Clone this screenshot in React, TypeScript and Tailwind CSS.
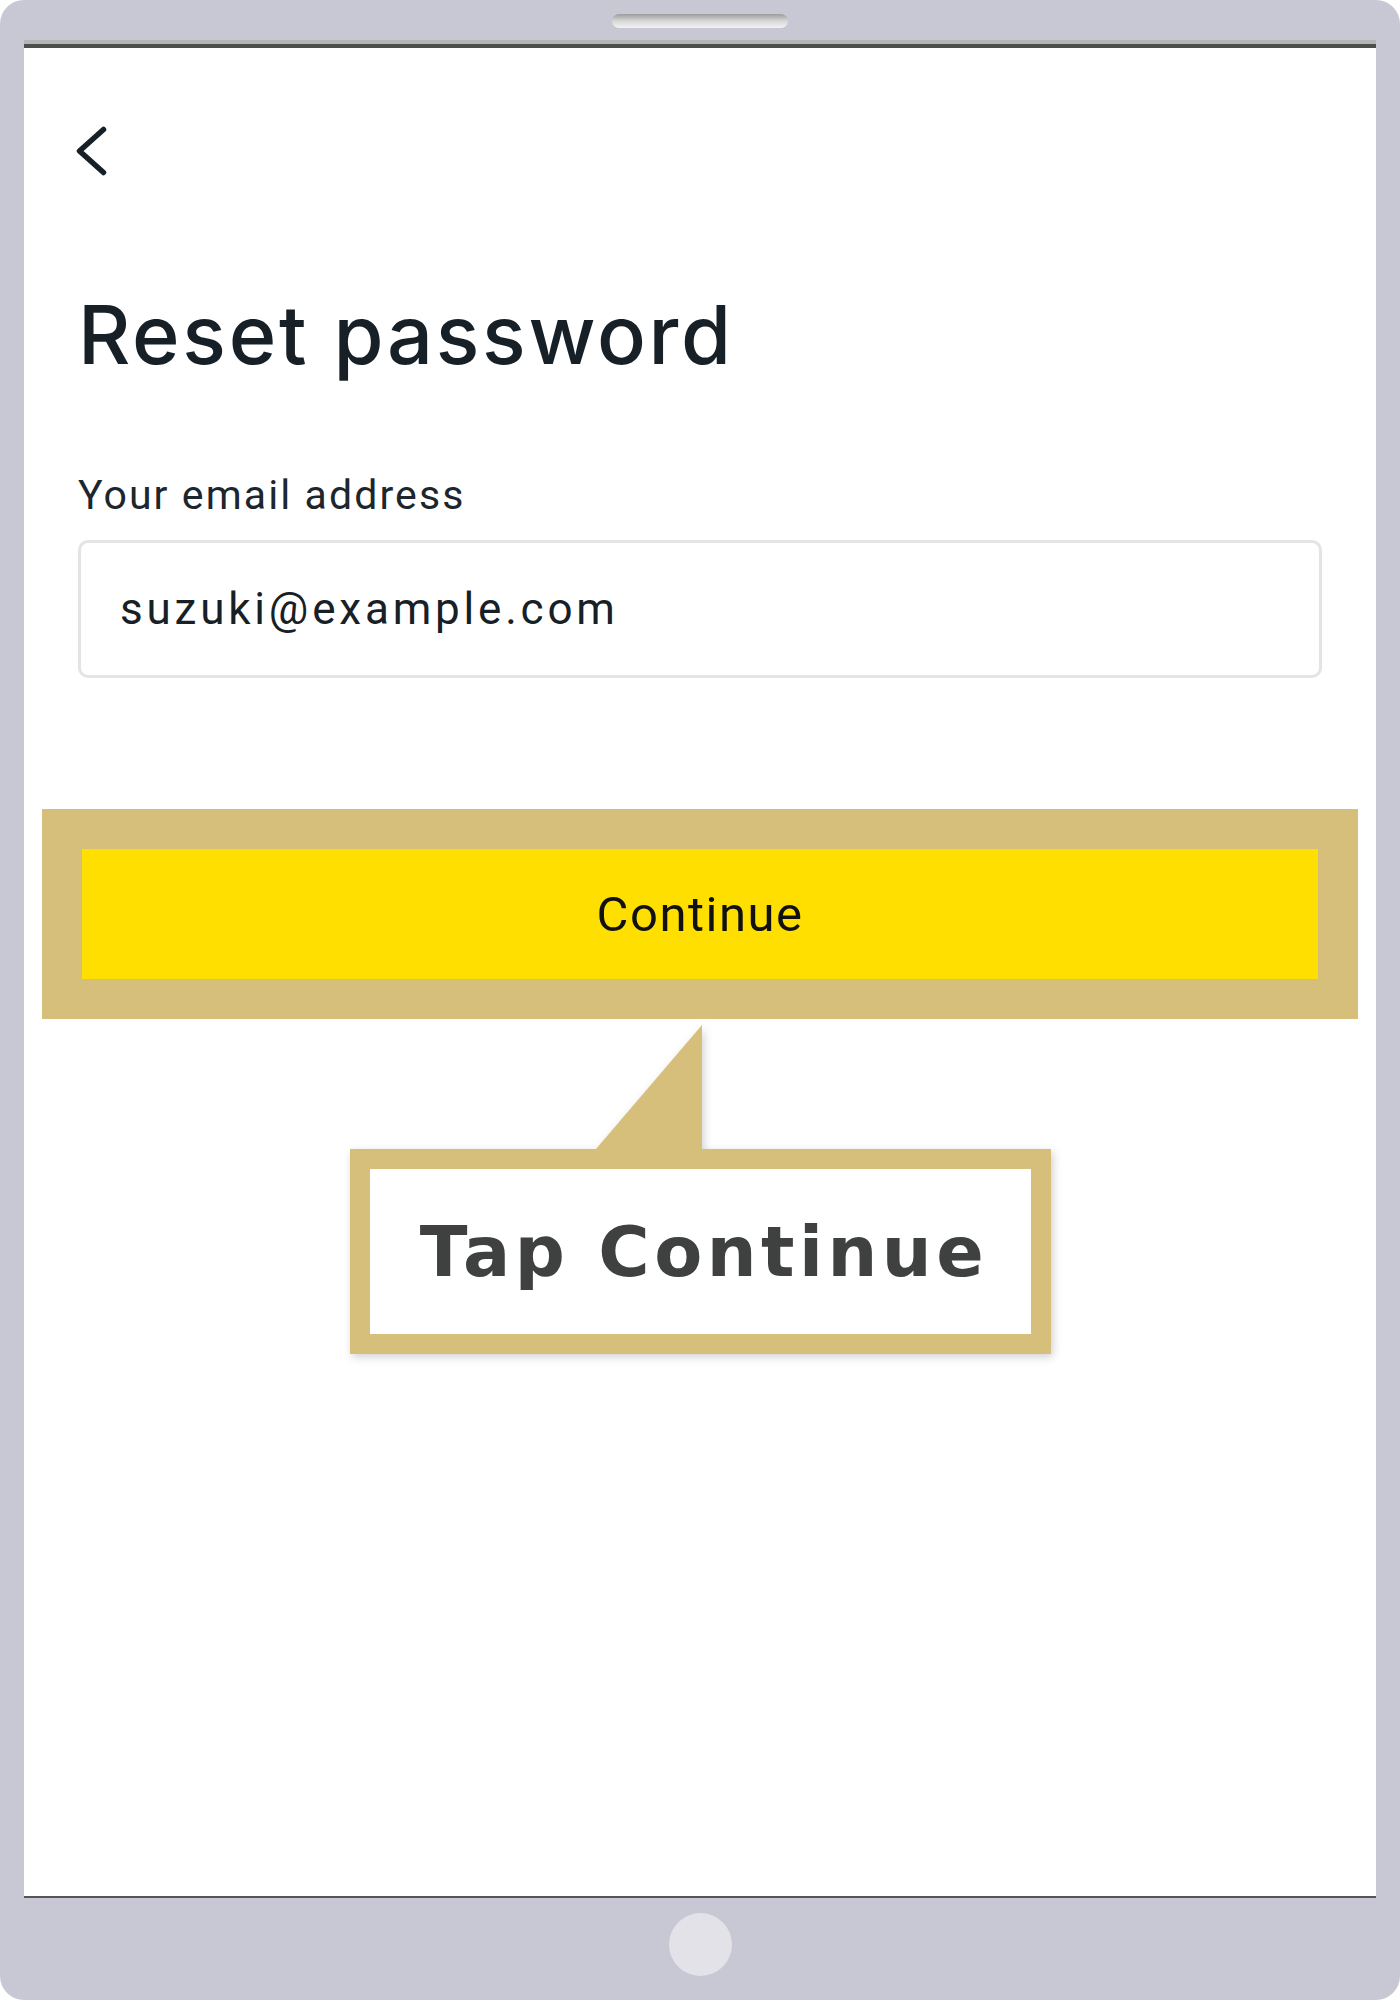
import React from 'react';

export default function App() {
  return (
    <div className="w-[1400px] h-[2000px] bg-[#c8c8d4] rounded-[24px] pt-[14px] px-[24px] flex flex-col">
      {/* earpiece */}
      <div className="mx-auto w-[176px] h-[14px] rounded-full bg-gradient-to-b from-[#9c9c9c] via-[#d8d8d8] to-[#f2f2f2]" />

      <div className="mt-[12px] h-[1858px] bg-white flex flex-col border-t-[4px] border-t-[#b4b4b4] border-b-[2px] border-b-[#555558]">
        <div className="h-[4px] bg-[#4d4d4d]" />
        <ResetPassword />
      </div>

      {/* home button */}
      <div className="mx-auto mt-[15px] w-[63px] h-[63px] rounded-full bg-[#e2e2e8]" />
    </div>
  );
}

function ResetPassword() {
  return (
    <div className="flex-1 px-[54px] flex flex-col">
      <button className="mt-[76px] -ml-[4px] w-[40px] h-[56px] text-[#172026]">
        <svg width="40" height="56" viewBox="0 0 40 56" fill="none">
          <path d="M29.5 5.5 L5.5 27 L29.5 48.5" stroke="currentColor" strokeWidth="5.5" strokeLinecap="round" strokeLinejoin="round" />
        </svg>
      </button>

      <h1 className="mt-[115px] text-[81px] leading-none font-medium tracking-[2.7px] text-[#172026] font-['Inter',sans-serif]">
        Reset password
      </h1>

      <label className="mt-[99px] text-[41px] leading-none tracking-[2.1px] text-[#1c262c] font-['Roboto',sans-serif]">
        Your email address
      </label>

      <div className="mt-[24px] h-[138px] border-[3px] border-[#e4e4e4] rounded-[10px] flex items-center pl-[39px]">
        <span className="text-[44px] leading-none tracking-[3.8px] text-[#172026] font-['Roboto',sans-serif]">
          suzuki@example.com
        </span>
      </div>

      {/* highlighted action */}
      <div className="mt-[131px] -mx-[36px] bg-[#d6bf7a] p-[40px]">
        <button className="w-full h-[130px] bg-[#ffdf00] flex items-center justify-center text-[49px] leading-none tracking-[1.5px] text-[#111111] font-['Roboto',sans-serif]">
          Continue
        </button>
      </div>

      <Callout text="Tap Continue" />
    </div>
  );
}

function Callout({ text }: { text: string }) {
  return (
    <div className="mt-[6px] mx-auto w-[701px] flex flex-col drop-shadow-[2px_3px_4px_rgba(0,0,0,0.18)]">
      <svg className="ml-[246px] block" width="106" height="124" viewBox="0 0 106 124">
        <polygon points="106,0 106,124 0,124" fill="#d6bf7a" />
      </svg>
      <div className="h-[205px] border-[20px] border-[#d6bf7a] bg-white flex items-center justify-center pl-[8px]">
        <span className="text-[70px] leading-none font-bold tracking-[4.5px] text-[#3f4141] font-['DejaVu_Sans',sans-serif]">
          {text}
        </span>
      </div>
    </div>
  );
}
